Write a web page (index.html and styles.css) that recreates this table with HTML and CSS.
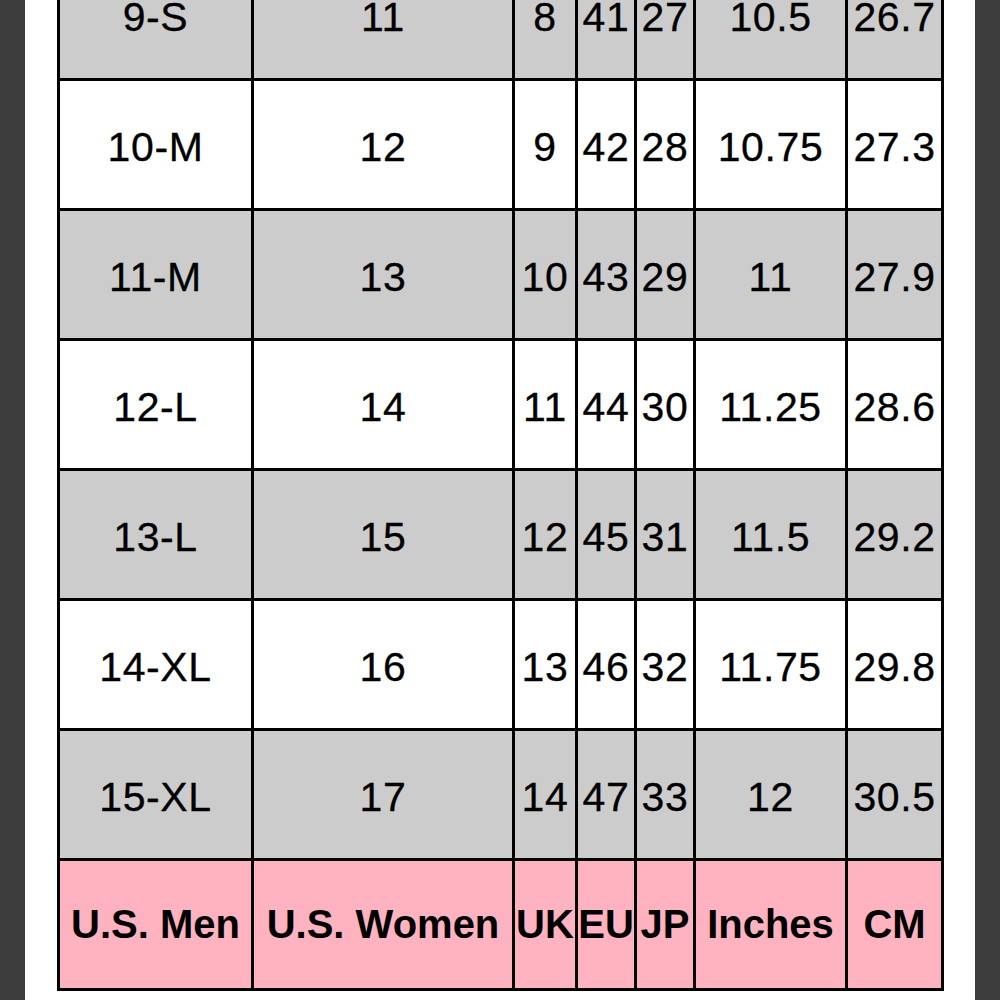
FILE: index.html
```html
<!DOCTYPE html>
<html lang="en">
<head>
<meta charset="utf-8">
<title>Size Chart</title>
<link rel="stylesheet" href="styles.css">
</head>
<body>
<main class="page">
  <div class="chart">
    <div class="cell gray">9-S</div><div class="cell gray">11</div><div class="cell gray">8</div><div class="cell gray">41</div><div class="cell gray">27</div><div class="cell gray">10.5</div><div class="cell gray">26.7</div>
    <div class="cell">10-M</div><div class="cell">12</div><div class="cell">9</div><div class="cell">42</div><div class="cell">28</div><div class="cell">10.75</div><div class="cell">27.3</div>
    <div class="cell gray">11-M</div><div class="cell gray">13</div><div class="cell gray">10</div><div class="cell gray">43</div><div class="cell gray">29</div><div class="cell gray">11</div><div class="cell gray">27.9</div>
    <div class="cell">12-L</div><div class="cell">14</div><div class="cell">11</div><div class="cell">44</div><div class="cell">30</div><div class="cell">11.25</div><div class="cell">28.6</div>
    <div class="cell gray">13-L</div><div class="cell gray">15</div><div class="cell gray">12</div><div class="cell gray">45</div><div class="cell gray">31</div><div class="cell gray">11.5</div><div class="cell gray">29.2</div>
    <div class="cell">14-XL</div><div class="cell">16</div><div class="cell">13</div><div class="cell">46</div><div class="cell">32</div><div class="cell">11.75</div><div class="cell">29.8</div>
    <div class="cell gray">15-XL</div><div class="cell gray">17</div><div class="cell gray">14</div><div class="cell gray">47</div><div class="cell gray">33</div><div class="cell gray">12</div><div class="cell gray">30.5</div>
    <div class="cell head">U.S. Men</div><div class="cell head">U.S. Women</div><div class="cell head">UK</div><div class="cell head">EU</div><div class="cell head">JP</div><div class="cell head">Inches</div><div class="cell head">CM</div>
  </div>
</main>
</body>
</html>
```

FILE: styles.css
```css
html, body {
  margin: 0;
  padding: 0;
  background: #3d3d3d;
  height: 100%;
  overflow: hidden;
}

.page {
  background: #ffffff;
  margin: 0 25px;
  padding: 0 31px 0 32px;
  min-height: 100vh;
  overflow: hidden;
}

.chart {
  display: grid;
  grid-template-columns: 191px 258px 60px 56px 56px 149px 93px;
  grid-auto-rows: 127px;
  gap: 3px;
  padding: 3px;
  background: #000000;
  margin-top: -52px;
  font-family: "Liberation Sans", Arial, sans-serif;
}

.cell {
  background: #ffffff;
  color: #000000;
  font-size: 41px;
  letter-spacing: 0.6px;
  -webkit-text-stroke: 0.3px #000;
  display: flex;
  align-items: center;
  justify-content: center;
  padding-top: 5px;
  box-sizing: border-box;
  white-space: nowrap;
  overflow: visible;
}

.cell.gray {
  background: #cccccc;
}

.cell.head {
  background: #ffb3c0;
  font-weight: bold;
  font-size: 40px;
  letter-spacing: 0;
  -webkit-text-stroke: 0;
  padding-top: 0;
}
```
